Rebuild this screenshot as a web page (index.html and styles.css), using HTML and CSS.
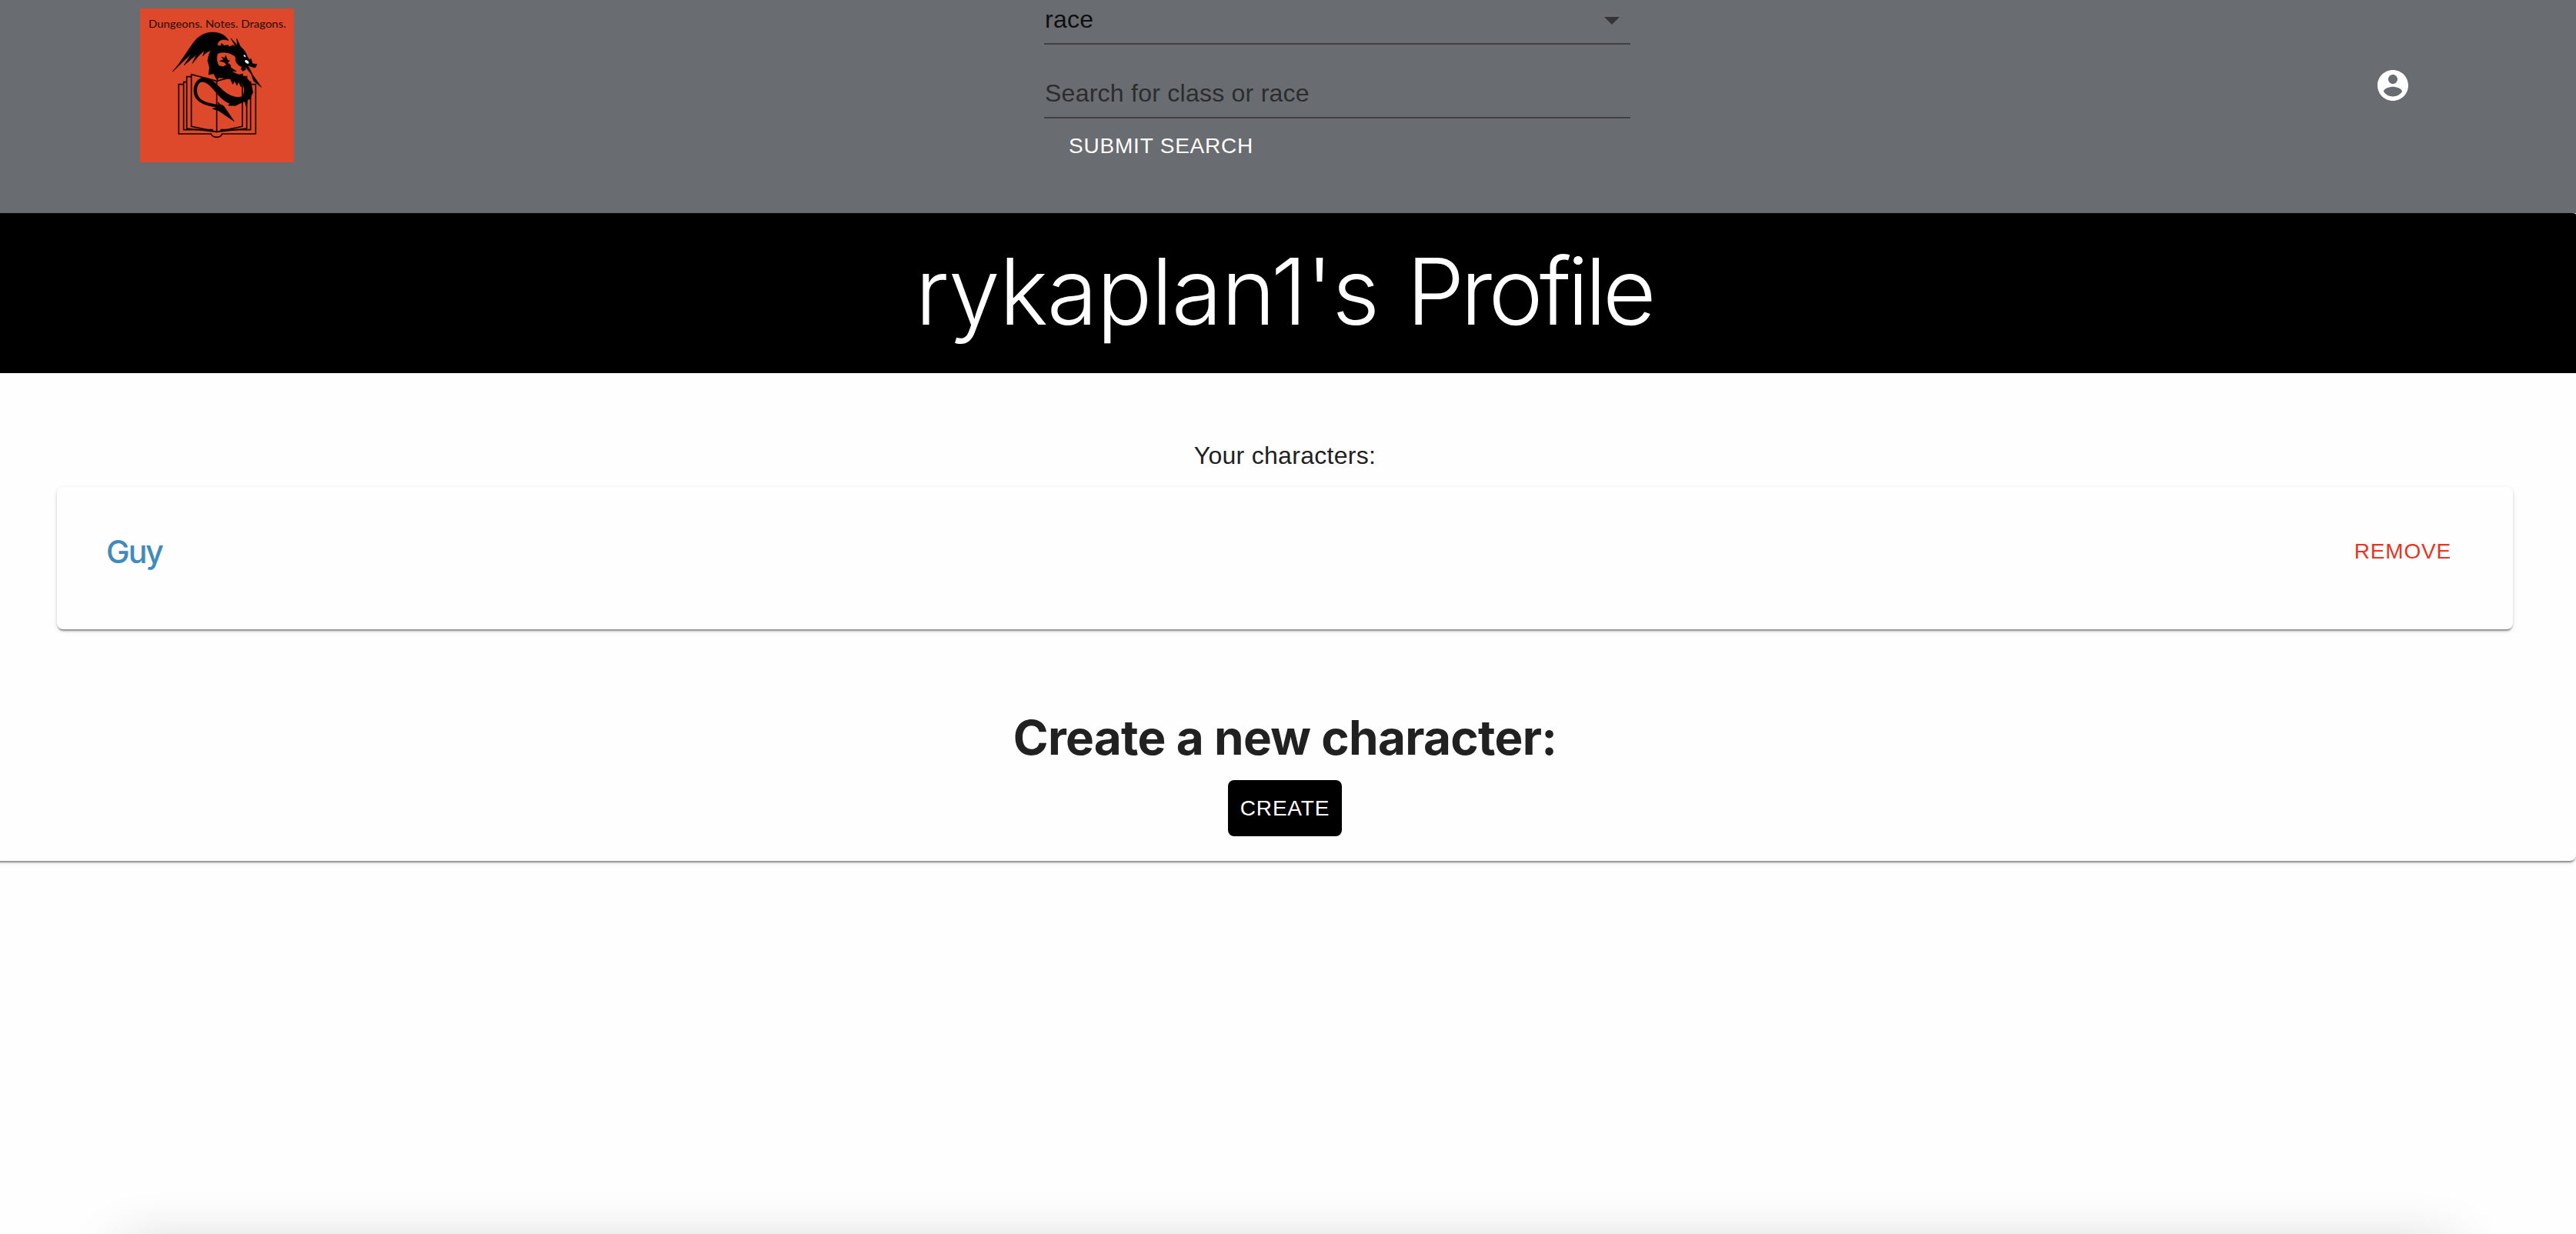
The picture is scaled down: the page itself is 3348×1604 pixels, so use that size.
FILE: index.html
```html
<!DOCTYPE html>
<html lang="en">
<head>
<meta charset="utf-8">
<title>rykaplan1's Profile</title>
<link rel="stylesheet" href="styles.css">
</head>
<body>
<div class="page">
<header class="header">
  <a class="logo" href="#">
    <svg viewBox="36 33 600 600" width="200" height="200" aria-label="Dungeons. Notes. Dragons.">
      <rect x="36" y="33" width="600" height="600" fill="#de482b"/>
      <text class="logo-text" x="69" y="108" textLength="536" lengthAdjust="spacingAndGlyphs">Dungeons. Notes. Dragons.</text>
      <!-- open book -->
      <g fill="none" stroke="#120503" stroke-width="5">
        <path d="M335 316L236 290V493L335 514L435 493V290Z"/>
        <path d="M236 299H218V501L335 514L452 501V299H435"/>
        <path d="M218 320H206V506H320M452 320H467V506H350"/>
        <path d="M206 329H187V522H313Q318 535 335 535Q352 535 356 522H487V329H467M335 316V514"/>
      </g>
      <!-- dragon -->
      <path stroke="#000" stroke-width="2" d="M163 279C195 245 215 205 246 164C270 134 300 123 331 127C354 130 370 139 381 158C360 149 340 155 337 177L350 179L354 169L364 178L380 176L382 183L399 176L410 184L390 149L416 178L413 151L427 181C440 192 449 205 455 222L463 234L468 228L474 248L492 251L485 264L470 260L456 254L475 292L509 340L479 316L470 289L444 257L448 271L437 277L430 269L434 260C421 257 408 245 409 232C411 219 402 216 388 209C374 203 350 202 338 210C333 224 334 243 344 257L361 260L374 252L364 242L347 238L361 233L355 222L367 227L370 216L377 234L385 237L377 245L388 253L390 264L412 278L390 278L420 291C450 296 470 318 473 345L476 361L469 374L467 386L456 388L450 414L445 395L430 401L408 412L380 411L387 404C355 392 336 363 318 344C301 325 283 312 267 323C253 337 253 368 269 384C285 400 308 403 342 410L340 398L348 407L362 413L403 473L343 432L319 424L335 418C297 412 263 403 250 375C238 344 253 310 278 304C311 298 337 333 361 354C380 371 407 384 431 378C448 365 445 336 431 321L430 339L420 318L414 333L405 315L398 328L388 308C370 305 350 302 341 303L338 314L323 287L304 291L307 263L300 237C303 221 305 207 314 194L292 207L281 218L287 196L266 216L240 247L256 212L207 255L236 211C209 233 188 257 163 279Z"/>
      <path d="M439 217q3-5 7-2l3 7q-6 2-10-5zM444 237q4-5 11-1q8 6 4 12q-10 2-15-11z" fill="#fff"/>
    </svg>
  </a>
  <form class="search">
    <div class="field field-select"><span>race</span>
      <svg class="caret" viewBox="0 0 20 10" width="20" height="10"><path d="M0 0H20L10 10Z"/></svg>
    </div>
    <div class="field field-input"><span>Search for class or race</span></div>
    <button class="button submit" type="button">Submit Search</button>
  </form>
  <a class="account" href="#" aria-label="Account">
    <svg viewBox="0 0 24 24" width="48" height="48"><path fill="#fff" d="M12 2C6.48 2 2 6.48 2 12s4.480 10 10 10 10-4.480 10-10S17.520 2 12 2zm0 3c1.660 0 3 1.340 3 3s-1.340 3-3 3-3-1.340-3-3 1.340-3 3-3zm0 14.200c-2.500 0-4.710-1.280-6-3.220.03-1.990 4-3.080 6-3.080 1.990 0 5.970 1.090 6 3.080-1.290 1.940-3.500 3.220-6 3.220z"/></svg>
  </a>
</header>
<main class="profile">
  <h2 class="title">rykaplan1's <span class="title-word">Profile</span></h2>
  <p class="subtitle">Your characters:</p>
  <article class="card">
    <a class="name" href="#">Guy</a>
    <button class="button remove" type="button">Remove</button>
  </article>
  <h1 class="heading">Create a new character:</h1>
  <button class="button create" type="button">Create</button>
</main>
<div class="bottom-shadow"></div>
</div>
</body>
</html>
```
FILE: styles.css
```css
* { box-sizing: border-box; }

body {
  margin: 0;
  background: #fefefe;
  color: #212121;
  font-family: "Liberation Sans", Arial, sans-serif;
  font-size: 32px;
}

.page {
  position: relative;
  height: 1604px;
  overflow: hidden;
}

a { text-decoration: none; }

.button {
  padding: 0;
  border: 0;
  background: none;
  font: 500 28px/49px "Liberation Sans", Arial, sans-serif;
  letter-spacing: 0.8px;
  text-transform: uppercase;
}

.header {
  display: grid;
  grid-template-columns: 1357px 762px 1fr;
  height: 277px;
  background: #696c70;
}

.logo { padding: 11px 0 0 182px; }
.logo svg, .account svg { display: block; }
.logo-text { font: 40px Lato, sans-serif; fill: #260c07; }

.search {
  display: flex;
  flex-direction: column;
  align-items: flex-start;
}

.field {
  display: flex;
  justify-content: space-between;
  width: 100%;
  border-bottom: 2px solid #404142;
  line-height: 38px;
  letter-spacing: 0.25px;
}

.field-select { height: 58px; padding: 6px 14px 0 1px; color: #0e0f0f; }
.field-input { height: 96px; padding: 44px 0 0 1px; color: #2b2d2e; }
.caret { margin-top: 16px; fill: #323435; }
.submit { margin: 11px 0 0 32px; color: #fff; }

.account { justify-self: end; padding: 87px 214px 0 0; }

.profile {
  display: flex;
  flex-direction: column;
  align-items: center;
  height: 842px;
  margin-left: -8px;
  border-radius: 8px;
  box-shadow: 0 4px 2px -2px rgba(0, 0, 0, .28), 0 2px 2px rgba(0, 0, 0, .16), 0 2px 6px rgba(0, 0, 0, .12);
}

.title {
  width: 100%;
  height: 208px;
  margin: 0;
  padding-right: 3px;
  border-radius: 8px 5px 0 0 / 8px 2px 0 0;
  background: #000;
  color: #fff;
  font: 300 120px/204px Inter, sans-serif;
  letter-spacing: -1.4px;
  word-spacing: 4px;
  text-align: center;
}

.title-word { letter-spacing: -5px; }

.subtitle {
  margin: 83px 0 1px;
  line-height: 48px;
  letter-spacing: 0.3px;
}

.card {
  display: flex;
  justify-content: space-between;
  width: 3192px;
  height: 185px;
  margin-top: 16px;
  padding: 59px 80px 0 64px;
  border-radius: 8px;
  box-shadow: 0 4px 2px -2px rgba(0, 0, 0, .28), 0 2px 2px rgba(0, 0, 0, .16), 0 2px 6px rgba(0, 0, 0, .12);
}

.name {
  color: #418bbc;
  font: 500 41px/51px Inter, sans-serif;
  letter-spacing: -2px;
}

.remove { height: 49px; color: #ec3323; }

.heading {
  margin: 101px 0 1px;
  font: 700 62px/80px Inter, sans-serif;
  letter-spacing: -0.7px;
}

.create {
  width: 148px;
  height: 73px;
  margin-top: 14px;
  border-radius: 8px;
  background: #000;
  color: #fff;
}

/* shadow cast upward by the sheet just below the fold */
.bottom-shadow {
  position: absolute;
  top: 1622px;
  left: 155px;
  right: 155px;
  height: 200px;
  border-radius: 20px;
  box-shadow: 0 0 76px rgba(0, 0, 0, .2);
}
```
